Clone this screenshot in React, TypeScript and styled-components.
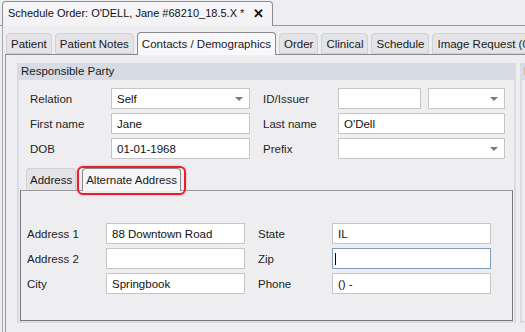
import React from "react";
import styled, { createGlobalStyle } from "styled-components";

const Global = createGlobalStyle`
  html, body { margin: 0; padding: 0; background: #eeeef1; }
  body { font-family: "Liberation Sans", Arial, sans-serif; font-size: 11.5px; color: #1a1a1a; }
  * { box-sizing: border-box; }
`;

const Window = styled.div`
  width: 525px;
  height: 332px;
  overflow: hidden;
  background: #eeeef1;
  display: flex;
  flex-direction: column;
`;

const DocTabBar = styled.div`
  height: 26px;
  padding: 2px 0 0 2px;
  display: flex;
  align-items: flex-end;
  border-bottom: 1px solid #9a9a9e;
`;

const DocTab = styled.div`
  width: 271px;
  height: 25px;
  margin-bottom: -1px;
  background: linear-gradient(#f7f7f9, #f2f2f5);
  border: 1px solid #8e8e92;
  border-bottom: none;
  border-radius: 4px 4px 0 0;
  display: flex;
  align-items: center;
  padding: 0 0 2px 5px;
  font-size: 11px;
  color: #111;
  white-space: nowrap;
`;

const CloseX = styled.span`
  margin-left: 9px;
  font-size: 13px;
  font-weight: bold;
  color: #111;
`;

const DocBody = styled.div`
  flex: 1;
  margin-left: 2px;
  border-left: 1px solid #a8a8ac;
  padding: 6px 0 0 2px;
  display: flex;
  flex-direction: column;
  min-width: 0;
`;

const TabStrip = styled.div`
  display: flex;
  align-items: flex-end;
  gap: 3px;
  height: 22px;
  padding-left: 1px;
  white-space: nowrap;
`;

const Tab = styled.div<{ $active?: boolean }>`
  flex-shrink: 0;
  height: ${(p) => (p.$active ? 23 : 21)}px;
  margin-bottom: ${(p) => (p.$active ? -1 : 0)}px;
  padding: 0 4px;
  display: flex;
  align-items: center;
  background: ${(p) => (p.$active ? "#f8f8fa" : "#e4e4e8")};
  border: 1px solid ${(p) => (p.$active ? "#8a8a8e" : "#d2d2d6")};
  border-bottom: ${(p) => (p.$active ? "none" : "1px solid #d2d2d6")};
  border-radius: 4px 4px 0 0;
  color: #1a1a1a;
  position: relative;
  z-index: ${(p) => (p.$active ? 1 : 0)};
`;

const TabPanel = styled.div`
  flex: 1;
  border-top: 1px solid #8a8a8e;
  border-left: 1px solid #9a9a9e;
  padding: 8px 0 0 11px;
  display: flex;
  gap: 4px;
`;

const Panel = styled.div<{ $w: number }>`
  width: ${(p) => p.$w}px;
  flex-shrink: 0;
  height: 260px;
  border: 2px solid #d7dbe3;
  border-top: none;
  display: flex;
  flex-direction: column;
  overflow: hidden;
`;

const PanelHeader = styled.div`
  height: 17px;
  background: #d7dbe3;
  padding: 2px 0 0 2px;
  color: #1a1a1a;
  white-space: nowrap;
`;

const FormGrid = styled.div`
  display: grid;
  grid-template-columns: 68px 139px 62px 167px;
  column-gap: 13px;
  row-gap: 4px;
  grid-auto-rows: 21px;
  padding: 8px 0 0 11px;
`;

const Label = styled.div`
  display: flex;
  align-items: center;
  color: #1e1e24;
  white-space: nowrap;
`;

const Field = styled.div<{ $focus?: boolean }>`
  height: 21px;
  background: #fff;
  border: 1px solid ${(p) => (p.$focus ? "#7f9dbd" : "#c6c6c8")};
  display: flex;
  align-items: center;
  padding: 0 5px;
  color: #111;
  position: relative;
  min-width: 0;
`;

const Caret = styled.span`
  width: 1px;
  height: 12px;
  background: #000;
  margin-left: -3px;
`;

const Arrow = styled.span`
  position: absolute;
  right: 6px;
  top: 8px;
  width: 0;
  height: 0;
  border-left: 4px solid transparent;
  border-right: 4px solid transparent;
  border-top: 4px solid #7a7a7e;
`;

const Pair = styled.div`
  display: flex;
  gap: 7px;
`;

const SubTabStrip = styled.div`
  margin: 9px 0 0 2px;
  padding-left: 5px;
  display: flex;
  align-items: flex-end;
  gap: 6px;
  height: 22px;
`;

const SubTab = styled.div<{ $active?: boolean }>`
  height: ${(p) => (p.$active ? 23 : 22)}px;
  margin-bottom: ${(p) => (p.$active ? -1 : 0)}px;
  padding: 0 3px;
  display: flex;
  align-items: center;
  background: ${(p) => (p.$active ? "#f6f6f9" : "#e4e4e8")};
  border: 1px solid ${(p) => (p.$active ? "#8a8a8e" : "#d2d2d6")};
  border-bottom: none;
  border-radius: 4px 4px 0 0;
  color: #1a1a1a;
  position: relative;
  z-index: 1;
`;

const Highlight = styled.span`
  position: absolute;
  left: -6px;
  right: -6px;
  top: -3px;
  bottom: -4px;
  border: 2px solid #e3202c;
  border-radius: 6px;
  box-shadow: 0 0 2px rgba(227, 32, 44, 0.5);
  pointer-events: none;
`;

const SubPanel = styled.div`
  margin-left: 1px;
  width: 493px;
  height: 131px;
  border: 1px solid #78787c;
  border-top-color: #9a9a9e;
  padding: 32px 0 0 6px;
`;

const AddrGrid = styled.div`
  display: grid;
  grid-template-columns: 66px 139px 61px 159px;
  column-gap: 13px;
  row-gap: 4px;
  grid-auto-rows: 21px;
`;

const tabs = ["Patient", "Patient Notes", "Contacts / Demographics", "Order", "Clinical", "Schedule", "Image Request (0)"];

export default function App() {
  return (
    <Window>
      <Global />
      <DocTabBar>
        <DocTab>
          Schedule Order: O'DELL, Jane #68210_18.5.X *
          <CloseX>✕</CloseX>
        </DocTab>
      </DocTabBar>
      <DocBody>
        <TabStrip>
          {tabs.map((t) => (
            <Tab key={t} $active={t.startsWith("Contacts")}>{t}</Tab>
          ))}
        </TabStrip>
        <TabPanel>
          <Panel $w={499}>
            <PanelHeader>Responsible Party</PanelHeader>
            <FormGrid>
              <Label>Relation</Label>
              <Field>Self<Arrow /></Field>
              <Label>ID/Issuer</Label>
              <Pair>
                <Field style={{ width: 83 }} />
                <Field style={{ width: 77 }}><Arrow /></Field>
              </Pair>
              <Label>First name</Label>
              <Field>Jane</Field>
              <Label>Last name</Label>
              <Field>O'Dell</Field>
              <Label>DOB</Label>
              <Field>01-01-1968</Field>
              <Label>Prefix</Label>
              <Field><Arrow /></Field>
            </FormGrid>
            <SubTabStrip>
              <SubTab>Address</SubTab>
              <SubTab $active>
                Alternate Address
                <Highlight />
              </SubTab>
            </SubTabStrip>
            <SubPanel>
              <AddrGrid>
                <Label>Address 1</Label>
                <Field>88 Downtown Road</Field>
                <Label>State</Label>
                <Field>IL</Field>
                <Label>Address 2</Label>
                <Field />
                <Label>Zip</Label>
                <Field $focus><Caret /></Field>
                <Label>City</Label>
                <Field>Springbook</Field>
                <Label>Phone</Label>
                <Field>() -</Field>
              </AddrGrid>
            </SubPanel>
          </Panel>
          <Panel $w={40}>
            <PanelHeader>E</PanelHeader>
          </Panel>
        </TabPanel>
      </DocBody>
    </Window>
  );
}
